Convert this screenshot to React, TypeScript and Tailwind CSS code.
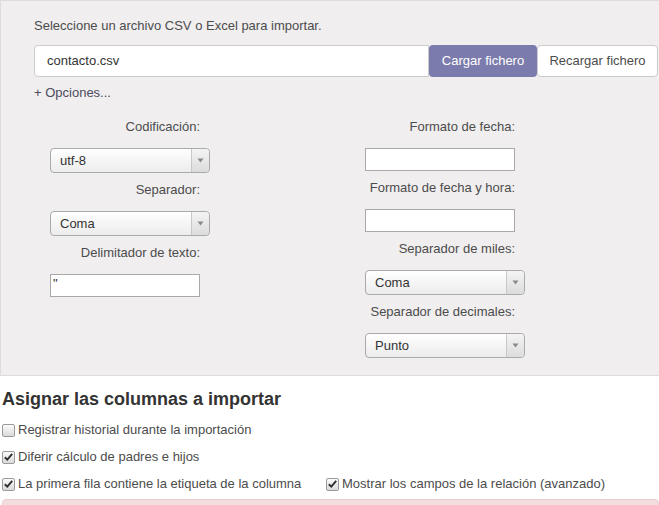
import React from "react";

const font = { fontFamily: '"Liberation Sans", Arial, sans-serif' };

function Select({ value }: { value: string }) {
  return (
    <div className="flex h-[25px] w-[160px] items-stretch rounded-[4px] border border-[#aaaaaa] bg-gradient-to-b from-white to-[#ececec]">
      <div className="flex flex-1 items-center pl-[9px] text-[13px] text-[#333]">{value}</div>
      <div className="flex w-[18px] items-center justify-center rounded-r-[4px] border-l border-[#c8c8c8] bg-gradient-to-b from-[#f4f4f4] to-[#dcdcdc]">
        <svg width="7" height="5" viewBox="0 0 7 5">
          <path d="M0.5 0.5 L6.5 0.5 L3.5 4.5 Z" fill="#8a8a8a" />
        </svg>
      </div>
    </div>
  );
}

function TextInput({ value = "" }: { value?: string }) {
  return (
    <div className="flex h-[23px] w-[150px] items-start border border-[#a9a9a9] bg-white pl-[2px] pt-[2px] text-[13px] leading-[14px] text-[#333]">
      {value}
    </div>
  );
}

function Label({ children }: { children: React.ReactNode }) {
  return (
    <div className="flex h-[20px] w-[150px] items-center justify-end text-[13px] text-[#4c4c4c]">{children}</div>
  );
}

function Check({ checked }: { checked: boolean }) {
  return (
    <div className="flex h-[13px] w-[13px] items-center justify-center rounded-[2px] border border-[#9a9a9a] bg-gradient-to-b from-[#fbfbfb] to-[#dadada]">
      {checked && (
        <svg width="9" height="8" viewBox="0 0 9 8">
          <path d="M0.8 4.2 L3.3 6.6 L8.2 0.9" stroke="#2f2f2f" strokeWidth="1.9" fill="none" />
        </svg>
      )}
    </div>
  );
}

function CheckRow({ checked, label }: { checked: boolean; label: string }) {
  return (
    <div className="flex h-[20px] items-center gap-[3px] text-[13px] text-[#4c4c4c]">
      <Check checked={checked} />
      <span>{label}</span>
    </div>
  );
}

export default function App() {
  return (
    <div className="h-[505px] w-[659px] overflow-hidden bg-white" style={font}>
      <div className="border-b border-l border-t border-[#dcdcdc] bg-[#f0eeef] pb-[17px] pl-[33px] pt-[15px]">
        <div className="flex h-[20px] items-center text-[13px] text-[#4c4c4c]">
          Seleccione un archivo CSV o Excel para importar.
        </div>
        <div className="mt-[9px] flex h-[32px]">
          <div className="flex w-[395px] items-center rounded-l-[4px] border border-[#cccccc] bg-white pl-[12px] text-[13px] text-[#333]">
            contacto.csv
          </div>
          <div className="flex w-[108px] items-center justify-center rounded-[4px] bg-[#7c7bad] text-[13px] text-white">
            Cargar fichero
          </div>
          <div className="flex w-[121px] items-center justify-center rounded-[4px] border border-[#cccccc] bg-white text-[13px] text-[#4c4c4c]">
            Recargar fichero
          </div>
        </div>
        <div className="mt-[6px] flex h-[20px] items-center text-[13px] text-[#4c4c5c]">+ Opciones...</div>
        <div className="mt-[14px] flex">
          <div className="ml-[16px] flex w-[315px] flex-col">
            <Label>Codificación:</Label>
            <div className="mt-[11px]"><Select value="utf-8" /></div>
            <div className="mt-[7px]"><Label>Separador:</Label></div>
            <div className="mt-[11px]"><Select value="Coma" /></div>
            <div className="mt-[7px]"><Label>Delimitador de texto:</Label></div>
            <div className="mt-[11px]"><TextInput value={'"'} /></div>
          </div>
          <div className="flex flex-col">
            <Label>Formato de fecha:</Label>
            <div className="mt-[11px]"><TextInput /></div>
            <div className="mt-[7px]"><Label>Formato de fecha y hora:</Label></div>
            <div className="mt-[11px]"><TextInput /></div>
            <div className="mt-[7px]"><Label>Separador de miles:</Label></div>
            <div className="mt-[11px]"><Select value="Coma" /></div>
            <div className="mt-[7px]"><Label>Separador de decimales:</Label></div>
            <div className="mt-[11px]"><Select value="Punto" /></div>
          </div>
        </div>
      </div>
      <div className="pl-[2px]">
        <div className="mt-[12px] flex h-[22px] items-center text-[18px] font-bold text-[#333]">
          Asignar las columnas a importar
        </div>
        <div className="mt-[10px]"><CheckRow checked={false} label="Registrar historial durante la importación" /></div>
        <div className="mt-[7px]"><CheckRow checked label="Diferir cálculo de padres e hijos" /></div>
        <div className="mt-[7px] flex">
          <div className="w-[324px]"><CheckRow checked label="La primera fila contiene la etiqueta de la columna" /></div>
          <CheckRow checked label="Mostrar los campos de la relación (avanzado)" />
        </div>
      </div>
      <div className="ml-[2px] mt-[5px] h-[20px] rounded-[4px] border border-[#ebccd1] bg-[#f2dede]" />
    </div>
  );
}
